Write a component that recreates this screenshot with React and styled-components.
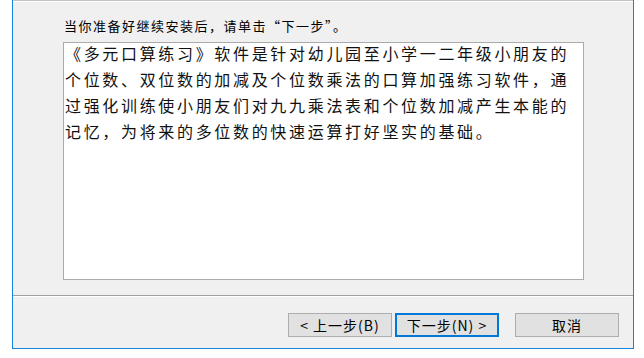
import React from 'react';
import styled, { createGlobalStyle } from 'styled-components';

const GlobalStyle = createGlobalStyle`
  html, body {
    margin: 0;
    padding: 0;
    background: #ffffff;
  }
  body {
    font-family: "Noto Sans CJK SC", "Liberation Sans", sans-serif;
    color: #000;
  }
`;

const Window = styled.div`
  box-sizing: border-box;
  margin-left: 12px;
  width: 622px;
  height: 349px;
  background: #f0f0f0;
  border: 1px solid #1883d7;
  border-top: none;
  display: flex;
  flex-direction: column;
`;

const Content = styled.div`
  border-top: 1px solid #c4c4c4;
  box-shadow: inset 0 1px 0 #ffffff;
  padding: 0 49px 15px 50px;
  display: flex;
  flex-direction: column;
`;

const Label = styled.div`
  margin: 17px 0 0 1px;
  height: 16px;
  font-size: 13px;
  line-height: 16px;
  letter-spacing: 1.5px;
  white-space: nowrap;
`;

const TextBox = styled.div`
  box-sizing: border-box;
  margin-top: 8px;
  height: 238px;
  background: #ffffff;
  border: 1px solid #ababab;
  padding: 0 0 0 1px;
  overflow: hidden;
`;

const Para = styled.div`
  margin-top: -3px;
  font-size: 16px;
  line-height: 26px;
  letter-spacing: 2.67px;
  color: #111;
`;

const Line = styled.div`
  white-space: nowrap;
`;

const Separator = styled.div`
  height: 0;
  border-top: 1px solid #a0a0a0;
  border-bottom: 1px solid #ffffff;
`;

const Footer = styled.div`
  flex: 1;
  box-sizing: border-box;
  padding: 16px 14px 0 0;
  display: flex;
  justify-content: flex-end;
  align-items: flex-start;
`;

const Button = styled.button`
  box-sizing: border-box;
  width: 104px;
  height: 24px;
  margin: 0 ${(p) => p.$gap || 0}px 0 0;
  padding: 0;
  background: #e1e1e1;
  border: 1px solid ${(p) => (p.$primary ? '#0078d7' : '#adadad')};
  box-shadow: ${(p) => (p.$primary ? 'inset 0 0 0 1px #0078d7' : 'none')};
  font-family: "Noto Sans CJK SC", "Liberation Sans", sans-serif;
  font-size: 14px;
  line-height: 20px;
  letter-spacing: 1px;
  color: #000;
  white-space: nowrap;
`;

const lines = [
  '《多元口算练习》软件是针对幼儿园至小学一二年级小朋友的',
  '个位数、双位数的加减及个位数乘法的口算加强练习软件，通',
  '过强化训练使小朋友们对九九乘法表和个位数加减产生本能的',
  '记忆，为将来的多位数的快速运算打好坚实的基础。',
];

export default function App() {
  return (
    <>
      <GlobalStyle />
      <Window>
        <Content>
          <Label>当你准备好继续安装后，请单击“下一步”。</Label>
          <TextBox>
            <Para>
              {lines.map((l) => (
                <Line key={l}>{l}</Line>
              ))}
            </Para>
          </TextBox>
        </Content>
        <Separator />
        <Footer>
          <Button $gap={3}>&lt; 上一步(B)</Button>
          <Button $primary $gap={16}>下一步(N) &gt;</Button>
          <Button>取消</Button>
        </Footer>
      </Window>
    </>
  );
}
